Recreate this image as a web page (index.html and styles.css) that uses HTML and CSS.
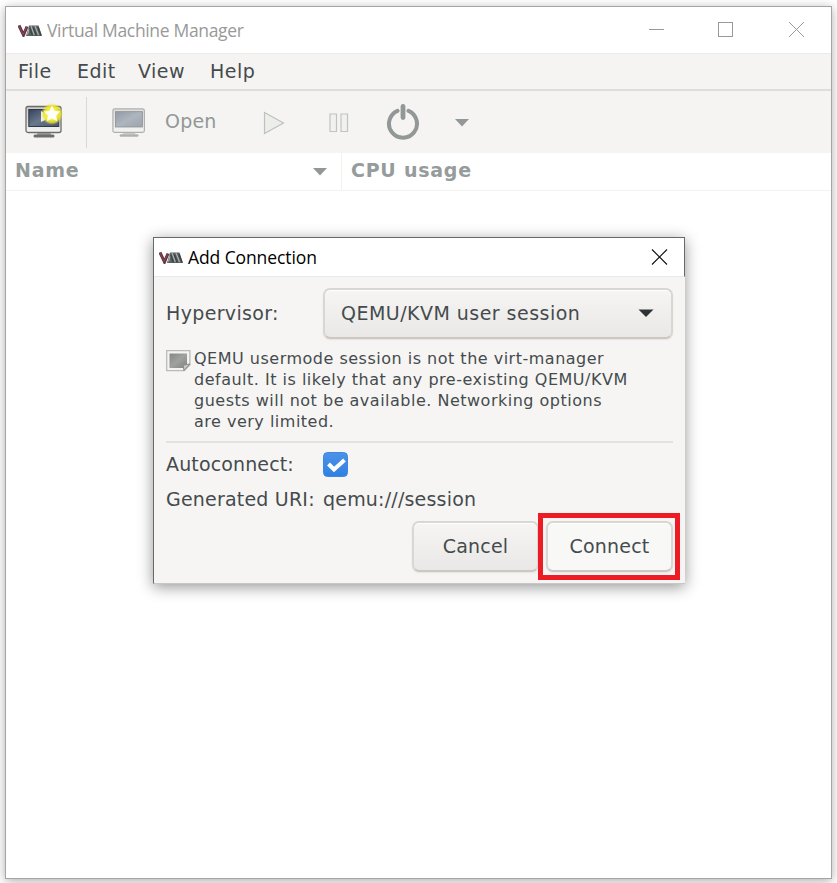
FILE: index.html
```html
<!DOCTYPE html>
<html lang="en">
<head>
<meta charset="utf-8">
<title>Virtual Machine Manager</title>
<link rel="stylesheet" href="styles.css">
</head>
<body>
<svg width="0" height="0" class="defs">
  <defs>
    <linearGradient id="screen" x1="0" y1="0" x2="1" y2="1"><stop offset="0" stop-color="#34435a"/><stop offset=".5" stop-color="#69788c"/><stop offset="1" stop-color="#46566c"/></linearGradient>
    <linearGradient id="bezel" x1="0" y1="0" x2="0" y2="1"><stop offset="0" stop-color="#c9c9c7"/><stop offset="1" stop-color="#f4f4f2"/></linearGradient>
    <radialGradient id="glow"><stop offset=".5" stop-color="#f5ee3c"/><stop offset=".75" stop-color="#f0e82b" stop-opacity=".85"/><stop offset="1" stop-color="#f0e82b" stop-opacity="0"/></radialGradient>
    <linearGradient id="note" x1="0" y1="0" x2="1" y2="1"><stop offset="0" stop-color="#858784"/><stop offset=".5" stop-color="#a0a29f"/><stop offset="1" stop-color="#80827f"/></linearGradient>
    <g id="monitor">
      <path d="M14 30h12l1 4H13z" fill="#a2a3a1"/>
      <path d="M11 35h18" stroke="#6d6e6c" stroke-width="3" stroke-linecap="round"/>
      <rect x="2" y="5.500" width="35" height="26" rx="2" fill="url(#bezel)" stroke="#6b6c6a" stroke-width="1.300"/>
      <rect x="4.800" y="8.500" width="30" height="17" fill="url(#screen)" stroke="#303a49"/>
    </g>
    <g id="vmm">
      <path d="M1 1.500L5.500 11 9 2.500" fill="none" stroke="#5c3540" stroke-width="3"/>
      <path d="M.9 1.500l4.300 9L8.500 3" fill="none" stroke="#9c4254" stroke-width="1"/>
      <path d="M8 12l3-10.500h9.500L24 12z" fill="#5c6162"/>
      <path d="M9.500 10.500l2-7M13 2l3.300 9M17 2l3.500 9" stroke="#a9b0b1" stroke-width="1.200" fill="none"/>
      <path d="M11.500 3.500l3 8M15.300 3.500l3 8M20 3l3 8.500" stroke="#3f4445" stroke-width="1.400" fill="none"/>
    </g>
  </defs>
</svg>
<main class="window">
  <header class="titlebar">
    <svg class="logo" width="24" height="13" viewBox="0 0 24 13"><use href="#vmm"/></svg>
    <h1 class="title">Virtual Machine Manager</h1>
    <svg class="controls" width="157" height="17" viewBox="0 0 157 17" shape-rendering="crispEdges" fill="none" stroke="#999">
      <path d="M1 7.500h15"/><rect x="70.500" y=".5" width="14" height="14"/><path d="M141 0l15 15M156 0l-15 15" shape-rendering="auto"/>
    </svg>
  </header>
  <nav class="menubar"><span class="m-file">File</span><span class="m-edit">Edit</span><span class="m-view">View</span><span>Help</span></nav>
  <div class="toolbar">
    <svg width="42" height="42" viewBox="0 0 42 42"><use href="#monitor"/><path d="M17 10v11l10-5z" fill="#eef0f2"/><circle cx="28" cy="13" r="11" fill="url(#glow)"/><path d="M28 4.500l2.500 5.200 5.700.8-4.100 4 1 5.700-5.100-2.700-5.100 2.700 1-5.700-4.100-4 5.700-.8z" fill="#fffffa"/></svg>
    <i class="divider"></i>
    <svg class="open-icon" width="38" height="36" viewBox="0 0 42 40"><use href="#monitor"/></svg>
    <span class="open-label">Open</span>
    <svg class="play" width="24" height="26" viewBox="0 0 24 26"><path d="M2.500 2.500v21l19-10.500z" fill="#eceeea" stroke="#bfc1be" stroke-width="1.200"/></svg>
    <svg class="pause" width="20" height="20" viewBox="0 0 20 20"><path d="M1 1h6.500v17.500H1zM12 1h6.500v17.500H12z" fill="#f1f2ef" stroke="#c1c3c0" stroke-width="1.200"/></svg>
    <svg class="power" width="34" height="36" viewBox="0 0 34 36"><path d="M11.500 6.800a14 14 0 1 0 11 0" fill="none" stroke="#929797" stroke-width="4" stroke-linecap="round"/><path d="M17 2.500v11" stroke="#929797" stroke-width="4.800" stroke-linecap="round"/></svg>
    <svg class="more" width="14" height="8" viewBox="0 0 14 8"><path d="M0 0h14L7 7.500z" fill="#929797"/></svg>
  </div>
  <div class="columns">
    <div class="col name"><span>Name</span><svg width="14" height="8" viewBox="0 0 14 8"><path d="M0 0h14L7 7.500z" fill="#929797"/></svg></div>
    <div class="col cpu"><span>CPU usage</span></div>
  </div>
</main>
<section class="dialog">
  <header class="dialog-title">
    <svg class="logo" width="24" height="13" viewBox="0 0 24 13"><use href="#vmm"/></svg>
    <h2 class="title">Add Connection</h2>
    <svg class="close" width="17" height="17" viewBox="0 0 17 17"><path d="M1 .5l15 15M16 .5L1 15.500" stroke="#111" stroke-width="1.100"/></svg>
  </header>
  <div class="form">
    <div class="row hypervisor"><span class="label">Hypervisor:</span>
      <button class="button select"><span>QEMU/KVM user session</span><svg width="16" height="8" viewBox="0 0 16 8"><path d="M.5.500h15L8 8z" fill="#2e3436"/></svg></button>
    </div>
    <div class="notice">
      <svg width="25" height="22" viewBox="0 0 25 22"><path d="M.7.700h23.200v14l-5.500 6H.7z" fill="#f4f5f2" stroke="#b9bbb8" stroke-width="1.300"/><path d="M3.500 3.500h17.500v11l-3.500 3.500h-14z" fill="url(#note)"/><path d="M24 14l-6 6.500-1-5.500z" fill="#c5c7c4" stroke="#888a87"/></svg>
      <p>QEMU usermode session is not the virt-manager<br>default. It is likely that any pre-existing QEMU/KVM<br>guests will not be available. Networking options<br>are very limited.</p>
    </div>
    <hr>
    <div class="row auto"><span class="label">Autoconnect:</span><svg width="25" height="25" viewBox="0 0 25 25"><defs><linearGradient id="blue" x2="0" y2="1"><stop stop-color="#4c93e8"/><stop offset="1" stop-color="#3080e2"/></linearGradient></defs><rect x=".5" y=".5" width="24" height="24" rx="4" fill="url(#blue)" stroke="#3d87e3"/><path d="M5.500 12l5.500 5.500 10.500-9.500" fill="none" stroke="#fff" stroke-width="4"/></svg></div>
    <div class="row uri"><span class="label">Generated URI:</span><span>qemu:///session</span></div>
    <div class="actions"><button class="button cancel">Cancel</button><span class="highlight"><button class="button connect">Connect</button></span></div>
  </div>
</section>
</body>
</html>
```
FILE: styles.css
```css
* { box-sizing: border-box; }
body {
  margin: 0;
  padding: 6px 5px 4px;
  width: 837px;
  height: 883px;
  overflow: hidden;
  background: #fff;
  color: #454b4d;
  font: 19px/24px "DejaVu Sans", sans-serif;
  letter-spacing: .2px;
}
svg { display: block; flex: none; }
.defs { position: absolute; }
.window {
  width: 827px;
  height: 873px;
  border: 1px solid #a4a4a7;
  background: #fff;
  box-shadow: 0 2px 10px rgba(0, 0, 0, .32);
}
.titlebar { display: flex; align-items: center; height: 46px; padding: 0 26px 0 12px; background: #fff; }
.title { margin: 0; font: 17.5px/24px "Open Sans", sans-serif; letter-spacing: -.1px; white-space: nowrap; }
.titlebar .title { margin-left: 5px; color: #999; letter-spacing: -.33px; }
.controls { margin-left: auto; }
.menubar { display: flex; align-items: center; height: 38px; padding: 0 0 1px 12px; border-top: 1px solid #eaeaef; border-bottom: 2px solid #dedddb; background: #f5f4f3; letter-spacing: .5px; }
.m-file { width: 59px; }
.m-edit { width: 61px; }
.m-view { width: 72px; }
.toolbar { display: flex; align-items: center; height: 62px; padding-left: 18px; background: #f5f4f2; color: #929797; }
.divider { width: 1px; height: 51px; margin-left: 20px; background: #d9d8d6; }
.open-icon { margin-left: 24px; opacity: .5; }
.open-label { margin: -2px 0 0 16px; width: 52px; }
.play { margin: 2px 0 0 45px; }
.pause { margin: 1px 0 0 43px; }
.power { margin-left: 37px; }
.more { margin: 2px 0 0 35px; }
.columns { display: flex; height: 38px; border-bottom: 1px solid #f2f2f1; color: #969b9b; font-weight: bold; letter-spacing: .75px; }
.col { display: flex; align-items: center; justify-content: space-between; padding: 0 9px; }
.col span { margin-top: -3px; }
.name { width: 336px; padding-right: 14px; border-right: 1px solid #f2f2f1; }
.dialog {
  position: absolute;
  left: 153px;
  top: 237px;
  width: 532px;
  height: 347px;
  border-top: 1px solid #68696b;
  border-left: 1px solid #68696b;
  border-bottom: 1px solid #c7c7c5;
  background: #f6f5f4;
  box-shadow: 0 3px 14px rgba(0, 0, 0, .42);
}
.dialog-title { display: flex; align-items: center; height: 39px; padding: 0 16px 0 5px; border-right: 1px solid #68696b; border-bottom: 1px solid #e8e8e8; background: #fff; }
.dialog-title .title { margin-left: 5px; color: #000; }
.close { margin-left: auto; }
.form { padding: 11px 12px 0; }
.row { display: flex; align-items: center; }
.label { width: 157px; flex: none; white-space: nowrap; }
.hypervisor .label { margin-top: -2px; letter-spacing: .35px; }
.button { height: 51px; border: 2px solid #dad6d2; border-bottom-color: #cec7c0; border-radius: 7px; background: linear-gradient(#f6f5f3, #e9e8e6); color: inherit; font: inherit; letter-spacing: inherit; box-shadow: 0 1px 2px rgba(0, 0, 0, .07), inset 0 1px #fff; }
.select { display: flex; align-items: center; justify-content: space-between; width: 350px; padding: 0 17px 2px 16px; letter-spacing: .47px; }
.notice { display: flex; align-items: flex-start; margin-top: 9px; }
.notice svg { margin-top: 2px; }
.notice p { margin: 0 0 0 3px; font-size: 16px; line-height: 21px; white-space: nowrap; letter-spacing: .5px; }
hr { height: 2px; margin: 9px 0 0; border: 0; background: #e3e2e0; }
.auto { height: 42px; }
.auto .label { letter-spacing: .13px; }
.uri { height: 27px; }
.actions { display: flex; justify-content: flex-end; align-items: center; margin: 1px -7px 0 0; }
.actions .button { width: 127px; padding: 0 0 2px; }
.highlight { position: relative; margin-left: -1px; padding: 8px 7px 8px 8px; }
.highlight::after { content: ""; position: absolute; inset: 0; border: 5px solid #ed1c24; }
.highlight .connect { display: block; background: #f8f8f7; }
```
